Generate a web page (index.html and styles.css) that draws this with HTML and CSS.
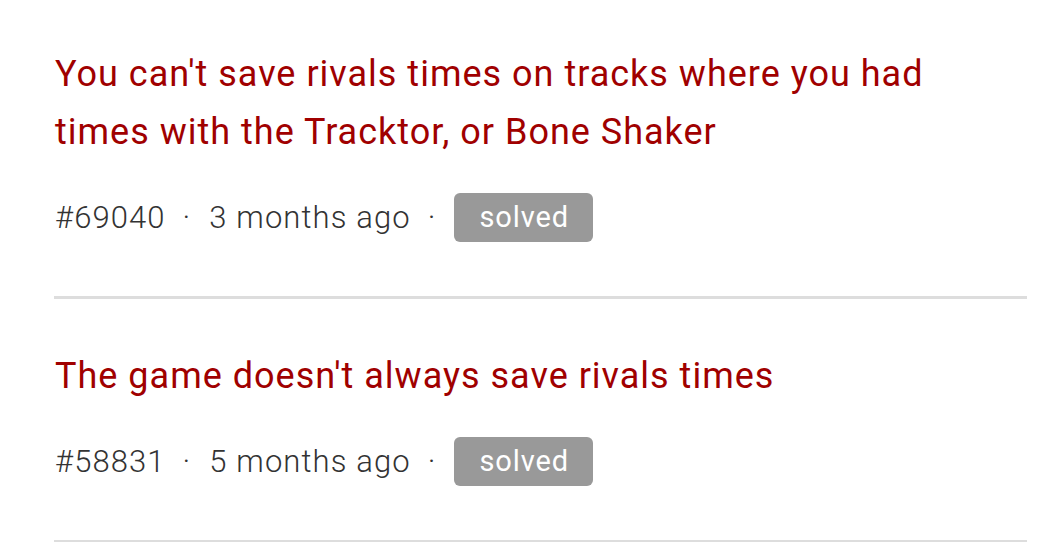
FILE: index.html
```html
<!DOCTYPE html>
<html>
<head>
<meta charset="utf-8">
<link rel="stylesheet" href="styles.css">
</head>
<body>
<ul class="list">
  <li class="item">
    <a class="title" href="#">You can't save rivals times on tracks where you had times with the Tracktor, or Bone Shaker</a>
    <div class="meta">
      <span class="num">#69040</span>
      <span class="sep">·</span>
      <span class="age">3 months ago</span>
      <span class="sep">·</span>
      <span class="badge">solved</span>
    </div>
  </li>
  <li class="item">
    <a class="title" href="#">The game doesn't always save rivals times</a>
    <div class="meta">
      <span class="num">#58831</span>
      <span class="sep">·</span>
      <span class="age">5 months ago</span>
      <span class="sep">·</span>
      <span class="badge">solved</span>
    </div>
  </li>
</ul>
</body>
</html>
```
FILE: styles.css
```css
html, body {
  margin: 0;
  padding: 0;
  background: #ffffff;
}
body {
  font-family: Roboto, "Liberation Sans", sans-serif;
}
.list {
  list-style: none;
  margin: 0;
  padding: 0 32px 0 54px;
}
.item {
  padding: 48px 0 54px 1px;
  border-bottom: 3px solid #dddddd;
}
.item:first-child {
  padding-top: 45px;
}
.title {
  display: block;
  color: #a00000;
  text-decoration: none;
  font-size: 36px;
  line-height: 58px;
  font-weight: 400;
  letter-spacing: 1px;
}
.meta {
  display: flex;
  align-items: center;
  margin-top: 32px;
  font-size: 31px;
  font-weight: 300;
  color: #333333;
  line-height: 49px;
  letter-spacing: 1.1px;
}
.sep {
  margin: 0 18px 0 17px;
}
.badge {
  display: inline-block;
  background: #999999;
  color: #ffffff;
  font-weight: 400;
  font-size: 29px;
  line-height: 49px;
  padding: 0 24px 0 25px;
  border-radius: 6px;
  letter-spacing: 0.9px;
}
```
